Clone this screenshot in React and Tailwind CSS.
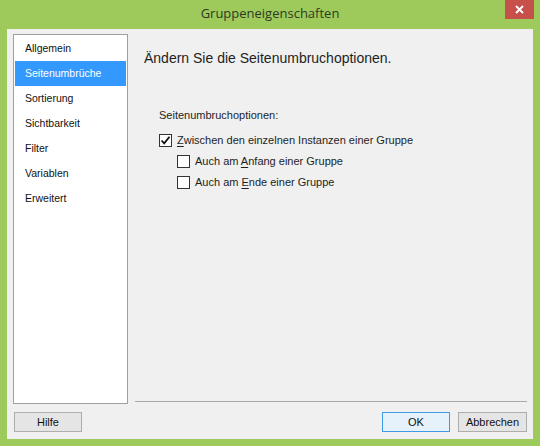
const pages = [
  "Allgemein",
  "Seitenumbrüche",
  "Sortierung",
  "Sichtbarkeit",
  "Filter",
  "Variablen",
  "Erweitert",
];

const Checkbox = ({ checked }) => (
  <span className="w-[13px] h-[13px] border border-[#333] bg-white flex items-center justify-center shrink-0">
    {checked && (
      <svg width="11" height="11" viewBox="0 0 11 11">
        <path d="M1.5 5.5 L4.2 8.3 L9.5 1.8" fill="none" stroke="#111" strokeWidth="1.8" />
      </svg>
    )}
  </span>
);

const Option = ({ checked, before, mnemonic, after, indent }) => (
  <div className={`h-[21px] flex items-center gap-[5px] ${indent ? "pl-[18px]" : ""}`}>
    <Checkbox checked={checked} />
    <span className="text-[11px] text-[#1e1e1e]">
      {before}
      <span className="underline underline-offset-2">{mnemonic}</span>
      {after}
    </span>
  </div>
);

export default function App() {
  return (
    <div
      className="w-[540px] h-[446px] bg-[#9dca5b] flex flex-col"
      style={{ fontFamily: '"Liberation Sans", Arial, sans-serif' }}
    >
      {/* title bar */}
      <div className="h-[29px] relative flex items-center justify-center">
        <span
          className="text-[13px] text-[#2e3a24] -mt-[1px]"
          style={{ fontFamily: '"Open Sans", sans-serif' }}
        >
          Gruppeneigenschaften
        </span>
        <div className="absolute top-0 right-[6px] w-[29px] h-[19px] bg-[#c7504b] flex items-center justify-center">
          <svg width="9" height="9" viewBox="0 0 9 9">
            <path d="M1 1 L8 8 M8 1 L1 8" stroke="#fff" strokeWidth="1.8" />
          </svg>
        </div>
      </div>

      {/* body */}
      <div className="flex-1 mx-[7px] mb-[7px] bg-[#f0f0f0] flex flex-col px-[6px] pt-[5px] pb-[7px]">
        <div className="h-[370px] flex gap-[7px]">
          <div className="w-[115px] bg-white border border-[#a0a0a0] p-[1px]">
            {pages.map((p) => (
              <div
                key={p}
                className={`h-[25px] pl-[10px] flex items-center text-[10.5px] ${
                  p === "Seitenumbrüche" ? "bg-[#3399ff] text-white" : "text-[#111]"
                }`}
              >
                {p}
              </div>
            ))}
          </div>

          <div className="flex-1 flex flex-col">
            <div className="flex-1 pl-[9px] pt-[14px]">
              <div className="text-[14px] leading-[20px] text-[#1e1e1e]">
                Ändern Sie die Seitenumbruchoptionen.
              </div>
              <div className="mt-[39px] pl-[15px]">
                <div className="text-[11px] leading-[16px] text-[#1e1e1e]">Seitenumbruchoptionen:</div>
                <div className="mt-[7px]">
                  <Option checked before="" mnemonic="Z" after="wischen den einzelnen Instanzen einer Gruppe" />
                  <Option indent before="Auch am " mnemonic="A" after="nfang einer Gruppe" />
                  <Option indent before="Auch am " mnemonic="E" after="nde einer Gruppe" />
                </div>
              </div>
            </div>
            <div className="h-px bg-[#a8a8a8] mb-[2px]" />
          </div>
        </div>

        <div className="mt-[8px] flex items-center">
          <button className="ml-[1px] w-[68px] h-[20px] border border-[#adadad] bg-[#e5e5e5] text-[11px] text-[#111]">
            Hilfe
          </button>
          <button className="ml-auto w-[68px] h-[20px] border border-[#3c9ae6] bg-[#e5f1fb] text-[11px] text-[#111]">
            OK
          </button>
          <button className="ml-[8px] w-[69px] h-[20px] border border-[#adadad] bg-[#e5e5e5] text-[11px] text-[#111]">
            Abbrechen
          </button>
        </div>
      </div>
    </div>
  );
}
